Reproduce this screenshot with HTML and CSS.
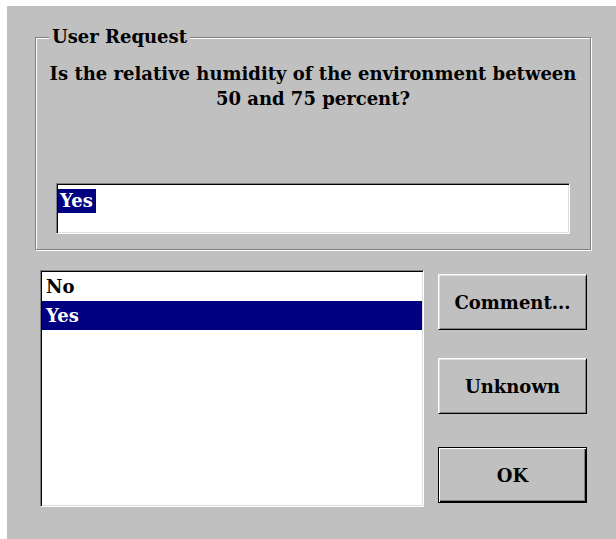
FILE: index.html
```html
<!DOCTYPE html>
<html lang="en">
<head>
<meta charset="utf-8">
<title>User Request</title>
<link rel="stylesheet" href="styles.css">
</head>
<body>
<div class="dialog">
  <fieldset class="request">
    <legend>User Request</legend>
    <p class="question">Is the relative humidity of the environment between<br>50 and 75 percent?</p>
    <div class="answer"><span class="answer-sel">Yes</span></div>
  </fieldset>
  <div class="lower">
    <ul class="choices">
      <li>No</li>
      <li class="selected">Yes</li>
    </ul>
    <div class="actions">
      <button class="btn btn-comment" type="button">Comment...</button>
      <button class="btn btn-unknown" type="button">Unknown</button>
      <button class="btn btn-ok" type="button">OK</button>
    </div>
  </div>
</div>
</body>
</html>
```

FILE: styles.css
```css
html, body {
  margin: 0;
  background: #ffffff;
  overflow: hidden;
}

.dialog {
  margin: 6px 0 0 7px;
  height: 533px;
  box-sizing: border-box;
  padding: 19px 0 0 28px;
  background: #c0c0c0;
  font-family: "DejaVu Serif", "Liberation Serif", serif;
  font-weight: bold;
  font-size: 18px;
  color: #000;
}

/* etched group box */
.request {
  margin: 0;
  width: 556px;
  box-sizing: border-box;
  padding: 0 0 15px;
  border: 1px solid #808080;
  box-shadow: inset 1px 1px 0 #ffffff, 1px 1px 0 #ffffff;
}

.request legend {
  margin-left: 13px;
  padding: 0 3px;
  line-height: 24px;
  background: #c0c0c0;
}

.question {
  margin: 12px 0 0;
  line-height: 25px;
  text-align: center;
}

/* sunken edit field */
.answer {
  margin: 72px 20px 0;
  height: 51px;
  box-sizing: border-box;
  padding: 5px 0 0 1px;
  background: #ffffff;
  border: 1px solid;
  border-color: #808080 #ffffff #ffffff #808080;
  box-shadow: inset 1px 1px 0 #000000, inset -1px -1px 0 #dfdfdf;
}

.answer-sel {
  display: inline-block;
  padding: 0 3px 0 2px;
  line-height: 24px;
  background: #000080;
  color: #ffffff;
}

.lower {
  display: flex;
  margin: 20px 0 0 5px;
}

/* sunken list box */
.choices {
  list-style: none;
  margin: 0;
  padding: 1px 1px 0;
  width: 384px;
  height: 237px;
  box-sizing: border-box;
  background: #ffffff;
  border: 1px solid;
  border-color: #808080 #ffffff #ffffff #808080;
  box-shadow: inset 1px 1px 0 #000000, inset -1px -1px 0 #dfdfdf;
}

.choices li {
  height: 29px;
  line-height: 29px;
  padding-left: 4px;
}

.choices li.selected {
  background: #000080;
  color: #ffffff;
}

.actions {
  display: flex;
  flex-direction: column;
  margin-left: 14px;
}

/* raised push buttons */
.btn {
  width: 149px;
  height: 56px;
  padding: 0;
  margin: 0;
  font: inherit;
  color: #000;
  background: #c0c0c0;
  border: 1px solid;
  border-color: #ffffff #000000 #000000 #ffffff;
  box-shadow: inset 1px 1px 0 #dfdfdf, inset -1px -1px 0 #808080;
}

.btn-comment { margin-top: 4px; }
.btn-unknown { margin-top: 28px; }

/* default button carries an extra black frame */
.btn-ok {
  margin-top: 33px;
  border-color: #000000;
  box-shadow: inset 1px 1px 0 #ffffff, inset -1px -1px 0 #000000, inset -2px -2px 0 #808080;
}
```
